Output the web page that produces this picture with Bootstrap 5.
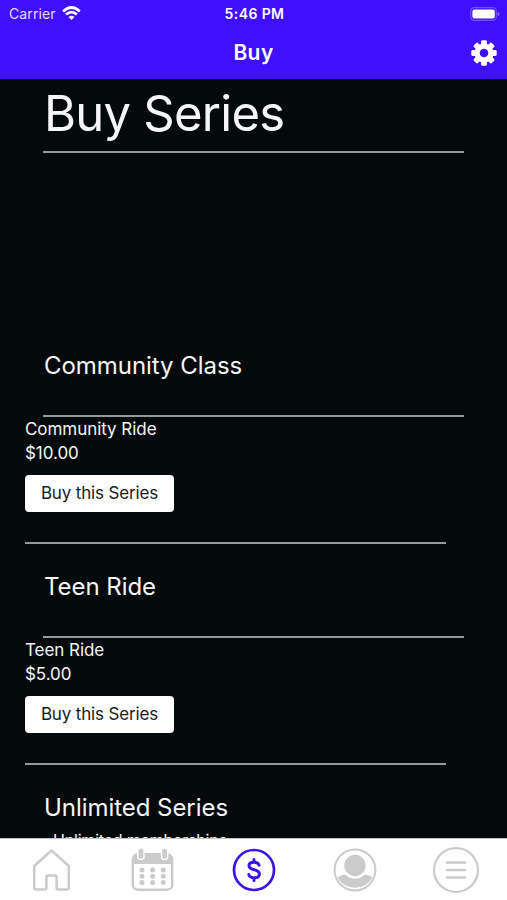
<!DOCTYPE html>
<html lang="en">
<head>
<meta charset="utf-8">
<meta name="viewport" content="width=device-width, initial-scale=1">
<title>Buy</title>
<link href="https://cdn.jsdelivr.net/npm/bootstrap@5.3.0/dist/css/bootstrap.min.css" rel="stylesheet">
<script src="https://cdn.jsdelivr.net/npm/bootstrap@5.3.0/dist/js/bootstrap.bundle.min.js" defer></script>
<style>
body{font-family:Inter,"Liberation Sans",sans-serif;background:#04090c;color:#f4f6f7;height:900px}
.top-area{background:#400fff;height:79px;color:#fff}
.status-row{height:27px;padding:0 7px 0 9px;font-size:14px}
.side-cell{flex:1 1 0}
.clock{font-size:14px;font-weight:600;letter-spacing:.4px}
.carrier{color:#e4dcff;font-size:14px;letter-spacing:.1px}
.wifi{margin-left:6px}
.title-row{height:51px;padding:0 10px}
.screen-title{font-size:21px;font-weight:600;letter-spacing:.4px}
.page-name{font-size:49px;line-height:70px;letter-spacing:-.75px;font-weight:400;padding-left:44px;height:72px}
.rule{height:2px;background:#96999b;width:421px}
.rule-in{margin-left:43px}
.spacer{height:179px}
.series{height:221px}
.series-name{font-size:24px;line-height:32px;font-weight:400;padding:18px 0 0 44px;height:83px;letter-spacing:-.05px}
.series-info{padding-left:25px}
.series-info p{font-size:17px;line-height:24px;letter-spacing:-.05px}
.buy-btn{width:149px;height:37px;font-size:17px;line-height:24px;letter-spacing:-.15px;border-radius:4px;background:#fff;color:#171b1e;margin-top:10px;white-space:nowrap}
.series-info .buy-btn{padding:0 0 2px}
.buy-btn:hover{background:#eee}
.series-info .rule{margin-top:30px}
.note{font-size:16px;line-height:20px;padding:6px 0 0 53px;letter-spacing:-.2px}
.tabs{height:62px;background:#fff;border-top:1px solid #c4c4c4;color:#cbcbcb}
.tabs a{color:inherit;flex:1 1 0}
.tabs a.on{color:#3d12e8}
svg{display:block}
</style>
</head>
<body class="d-flex flex-column overflow-hidden">
<header class="top-area flex-shrink-0">
  <div class="status-row d-flex align-items-center">
    <div class="side-cell d-flex align-items-center"><span class="carrier">Carrier</span>
      <svg class="wifi" width="19" height="15" viewBox="0 0 19 15" fill="none" stroke="#fff" stroke-width="2.7"><path d="M1.2 5.4Q9.5-2.4 17.8 5.4"/><path d="M4.1 8.5Q9.5 3.6 14.9 8.5"/><path d="M9.5 14 6.5 11Q9.5 8.4 12.5 11Z" fill="#fff" stroke="none"/></svg>
    </div>
    <span class="clock">5:46 PM</span>
    <div class="side-cell d-flex justify-content-end">
      <svg width="30" height="14" viewBox="0 0 30 14"><rect x=".7" y=".7" width="25.6" height="12.6" rx="3.6" fill="none" stroke="#7450ff" stroke-width="1.2"/><rect x="2.4" y="2.4" width="22.4" height="9.2" rx="2" fill="#fff"/><path d="M27.7 4.8Q29.6 5.5 29.6 7T27.7 9.2Z" fill="#8b6bff"/></svg>
    </div>
  </div>
  <div class="title-row d-flex align-items-center">
    <div class="side-cell"></div>
    <h1 class="screen-title mb-0">Buy</h1>
    <div class="side-cell d-flex justify-content-end">
      <svg width="26" height="26" viewBox="-13 -13 26 26" aria-label="Settings"><g fill="#fff"><g id="teeth"><rect x="-2.9" y="-12.7" width="5.8" height="25.4" rx="1.3"/><rect x="-12.7" y="-2.9" width="25.4" height="5.8" rx="1.3"/></g><use href="#teeth" transform="rotate(45)"/><circle r="9.6"/></g><circle r="4.3" fill="#400fff"/></svg>
    </div>
  </div>
</header>
<main class="flex-grow-1 overflow-hidden">
  <h2 class="page-name mb-0">Buy Series</h2>
  <div class="rule rule-in"></div>
  <div class="spacer"></div>
  <section class="series">
    <h3 class="series-name mb-0">Community Class</h3>
    <div class="rule rule-in"></div>
    <div class="series-info">
      <p class="mb-0">Community Ride</p>
      <p class="mb-0">$10.00</p>
      <button class="btn buy-btn d-block">Buy this Series</button>
      <div class="rule"></div>
    </div>
  </section>
  <section class="series">
    <h3 class="series-name mb-0">Teen Ride</h3>
    <div class="rule rule-in"></div>
    <div class="series-info">
      <p class="mb-0">Teen Ride</p>
      <p class="mb-0">$5.00</p>
      <button class="btn buy-btn d-block">Buy this Series</button>
      <div class="rule"></div>
    </div>
  </section>
  <section>
    <h3 class="series-name mb-0 h-auto">Unlimited Series</h3>
    <p class="note mb-0">Unlimited memberships</p>
  </section>
</main>
<nav class="tabs d-flex align-items-center flex-shrink-0">
  <a href="#" aria-label="Home" class="d-flex justify-content-center"><svg width="48" height="48" viewBox="0 0 48 48" fill="none" stroke="currentColor" stroke-width="2.5" stroke-linejoin="round"><path d="M24.5 4.5 41.8 20V41.5Q41.8 43.5 39.8 43.5H31.6Q29.6 43.5 29.6 41.5V31.5Q29.6 29.5 27.6 29.5H21.4Q19.4 29.5 19.4 31.5V41.5Q19.4 43.5 17.4 43.5H9.2Q7.2 43.5 7.2 41.5V20Z"/></svg></a>
  <a href="#" aria-label="Schedule" class="d-flex justify-content-center"><svg width="48" height="48" viewBox="-.5 0 48 48"><rect x="4.3" y="8.3" width="39.4" height="35.4" rx="5" fill="none" stroke="currentColor" stroke-width="2.4"/><path d="M4 18V13Q4 8 9 8H39Q44 8 44 13V18Z" fill="currentColor"/><g fill="currentColor" stroke="#fff" stroke-width="1.4"><rect x="9.3" y="2" width="6.2" height="11.5" rx="3.1"/><rect x="33" y="2" width="6.2" height="11.5" rx="3.1"/></g><path d="M13.5 24H35M13.5 30.2H35M13.5 36.4H35" stroke="currentColor" stroke-width="5" stroke-linecap="round" stroke-dasharray="0 10.6"/></svg></a>
  <a href="#" aria-label="Buy" class="on d-flex justify-content-center"><svg width="48" height="48" viewBox="0 0 48 48" fill="none" stroke="currentColor" stroke-width="2.7" stroke-linecap="round"><circle cx="24" cy="24" r="20"/><path d="M29 19.2Q28.2 16.2 24 16.2 19 16.2 19 19.8C19 25.3 29.4 22 29.4 28Q29.4 31.8 24.3 31.8 19.6 31.8 18.8 28.5M24 13.6V16M24 32V34.6" stroke-width="3"/></svg></a>
  <a href="#" aria-label="Profile" class="d-flex justify-content-center"><svg width="48" height="48" viewBox="0 0 48 48"><circle cx="24" cy="24" r="20.4" fill="none" stroke="currentColor" stroke-width="2"/><circle cx="24" cy="19.5" r="10.7" fill="currentColor"/><path d="M6.6 31.5Q9.5 29 14 28.6Q18.6 32.8 24 32.8T34 28.6Q38.5 29 41.4 31.5A20 20 0 0 1 6.6 31.5Z" fill="currentColor"/></svg></a>
  <a href="#" aria-label="Menu" class="d-flex justify-content-center"><svg width="48" height="48" viewBox="0 0 48 48" fill="none" stroke="currentColor" stroke-width="2.2"><circle cx="24" cy="24" r="22"/><path d="M15 16.5H33M15 24H33M15 31.5H33" stroke-width="2.7" stroke-linecap="round"/></svg></a>
</nav>
</body>
</html>
